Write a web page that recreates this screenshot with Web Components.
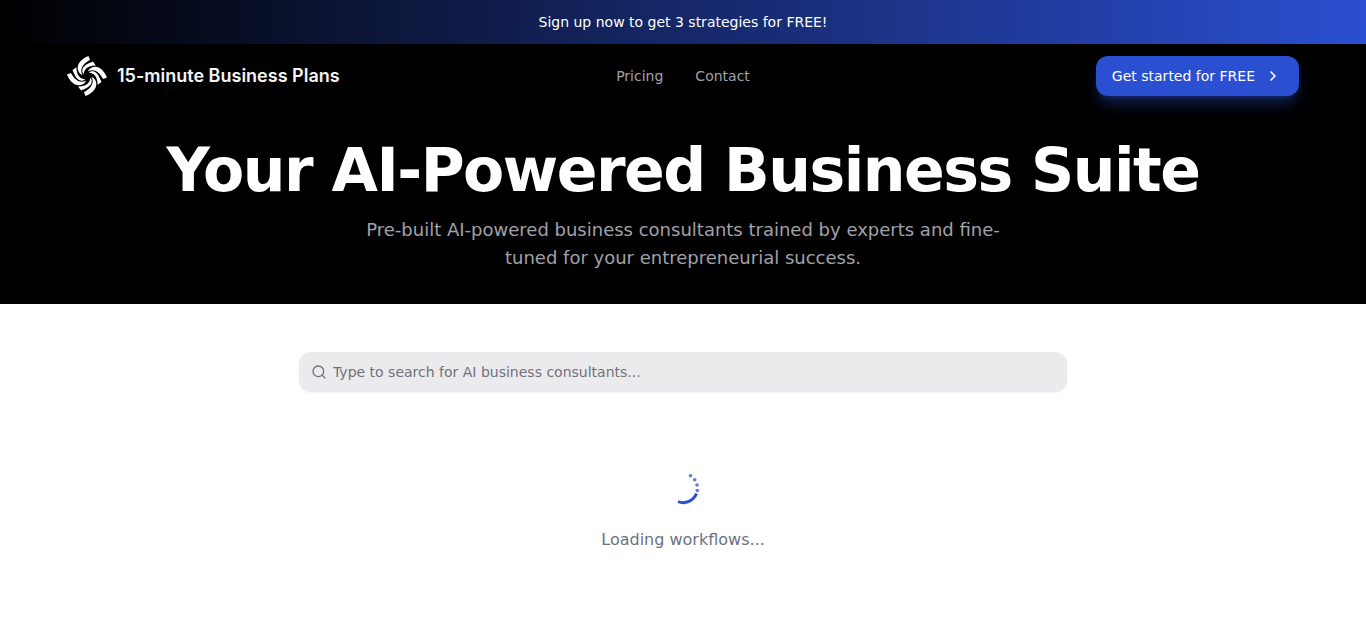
<!DOCTYPE html>
<html lang="en">
<head>
<meta charset="utf-8">
<meta name="viewport" content="width=device-width, initial-scale=1">
<title>15-minute Business Plans</title>
<style>
  :root { --brand: #2b4fd1; --muted: #a1a1aa; }
  body { margin: 0; background: #fff; font: 14px/20px "DejaVu Sans", sans-serif; }
</style>
</head>
<body>
<plans-page></plans-page>
<script>
const define = (name, html) => {
  const template = document.createElement('template');
  template.innerHTML = html;
  customElements.define(name, class extends HTMLElement {
    constructor() {
      super();
      this.attachShadow({ mode: 'open' }).append(template.content.cloneNode(true));
    }
  });
};

define('promo-banner', `
  <style>
    :host { display: block; padding: 12px 24px; text-align: center; color: #fff;
      background: linear-gradient(to right, #000, var(--brand)); }
  </style>
  <slot></slot>`);

define('brand-logo', `
  <style>
    :host { display: block; }
    a { display: flex; align-items: center; gap: 10px; color: #f4f4f5; text-decoration: none;
      font: 600 18px/40px Inter, sans-serif; white-space: nowrap; }
    svg { width: 40px; height: 40px; flex: none; }
  </style>
  <a href="#">
    <svg viewBox="-20 -20 40 40" fill="#fff" aria-hidden="true">
      <defs>
        <g id="blades">
          <path d="M1.500 -20C-5 -17.500 -9.800 -12.500 -9.300 -7.500C-9 -4.500 -7.500 -2.200 -4.500 -.8C-6.500 -4.500 -6 -8 -3.500 -11C-1.500 -13.500 1 -14.800 3 -16.200Z"/>
          <path d="M6 -14.500C2 -12.800 -2.800 -11 -4.300 -7.500C-5.200 -5 -4.600 -3 -3.200 -1.800C-3.200 -5.500 -1 -8.300 2.500 -9.600C4.500 -10.300 6.500 -10.600 8.800 -10.600Z"/>
        </g>
      </defs>
      <use href="#blades"/>
      <use href="#blades" transform="rotate(90)"/>
      <use href="#blades" transform="rotate(180)"/>
      <use href="#blades" transform="rotate(270)"/>
    </svg>
    <span>15-minute Business Plans</span>
  </a>`);

define('nav-link', `
  <style>
    :host { display: block; }
    a { color: var(--muted); text-decoration: none; }
  </style>
  <a href="#"><slot></slot></a>`);

define('cta-button', `
  <style>
    :host { display: block; }
    button { display: flex; align-items: center; gap: 8px; height: 40px; padding: 0 16px;
      border: 0; border-radius: 12px; background: var(--brand); color: #fff; font: inherit;
      white-space: nowrap; cursor: pointer;
      box-shadow: 0 10px 15px -3px rgb(43 79 209 / .4), 0 4px 6px -4px rgb(43 79 209 / .4); }
    svg { width: 20px; height: 20px; }
  </style>
  <button type="button"><slot></slot>
    <svg viewBox="0 0 20 20" fill="none" stroke="#fff" stroke-width="1.600" stroke-linecap="round" stroke-linejoin="round" aria-hidden="true"><path d="M8 6l4 4-4 4"/></svg>
  </button>`);

define('site-header', `
  <style>
    :host { display: block; }
    header { display: grid; grid-template-columns: 1fr auto 1fr; align-items: center;
      max-width: 1232px; margin: 0 auto; padding: 12px 24px; }
    nav { display: flex; gap: 32px; }
    cta-button { justify-self: end; }
  </style>
  <header>
    <brand-logo></brand-logo>
    <nav aria-label="Main"><nav-link>Pricing</nav-link><nav-link>Contact</nav-link></nav>
    <cta-button>Get started for FREE</cta-button>
  </header>`);

define('page-hero', `
  <style>
    :host { display: block; padding: 32px 24px; text-align: center; }
    h1 { margin: 0; color: #fff; font-size: 60px; line-height: 60px; font-weight: 700; letter-spacing: -0.025em; }
    p { max-width: 672px; margin: 16px auto 0; color: var(--muted); font-size: 18px; line-height: 28px; }
  </style>
  <h1><slot name="title"></slot></h1>
  <p><slot></slot></p>`);

define('search-box', `
  <style>
    :host { display: block; max-width: 768px; margin: 0 auto; }
    label { display: flex; align-items: center; gap: 6px; height: 40px; padding: 0 12px; box-sizing: border-box;
      border-radius: 12px; background: #ebebed; color: #71717a; box-shadow: 0 1px 2px rgb(0 0 0 / .05); }
    svg { width: 16px; height: 16px; flex: none; }
    input { flex: 1; min-width: 0; padding: 0; border: 0; outline: 0; background: none; color: #18181b; font: inherit; }
    input::placeholder { color: #71717a; opacity: 1; }
  </style>
  <label>
    <svg viewBox="0 0 24 24" fill="none" stroke="currentColor" stroke-width="2" stroke-linecap="round" stroke-linejoin="round" aria-hidden="true"><circle cx="11" cy="11" r="8"/><path d="m21 21-4.300-4.300"/></svg>
    <input type="text" aria-label="Search AI business consultants" placeholder="Type to search for AI business consultants...">
  </label>`);

define('loading-state', `
  <style>
    :host { display: flex; flex-direction: column; align-items: center; gap: 20px;
      color: #6b7280; font-size: 16px; line-height: 24px; }
    svg { width: 40px; height: 40px; }
  </style>
  <svg viewBox="-20 -20 40 40" fill="none" aria-hidden="true">
    <path d="M-5 13.700A14.500 14.500 0 0 0 13.500 5.500" stroke="var(--brand)" stroke-width="3"/>
    <g fill="var(--brand)" opacity=".75"><circle cx="14.300" cy="2.500" r="1.800"/><circle cx="14" cy="-3" r="1.800"/><circle cx="11.700" cy="-8.300" r="1.800"/><circle cx="7.500" cy="-12.300" r="1.800"/></g>
  </svg>
  <div role="status"><slot></slot></div>`);

define('plans-page', `
  <style>
    :host { display: block; }
    .top { background: #000; }
    main { padding: 48px 24px; }
    loading-state { margin-top: 76px; }
  </style>
  <div class="top">
    <promo-banner>Sign up now to get 3 strategies for FREE!</promo-banner>
    <site-header></site-header>
    <page-hero><span slot="title">Your AI-Powered Business Suite</span>Pre-built AI-powered business consultants trained by experts and fine-tuned for your entrepreneurial success.</page-hero>
  </div>
  <main>
    <search-box></search-box>
    <loading-state>Loading workflows...</loading-state>
  </main>`);
</script>
</body>
</html>
